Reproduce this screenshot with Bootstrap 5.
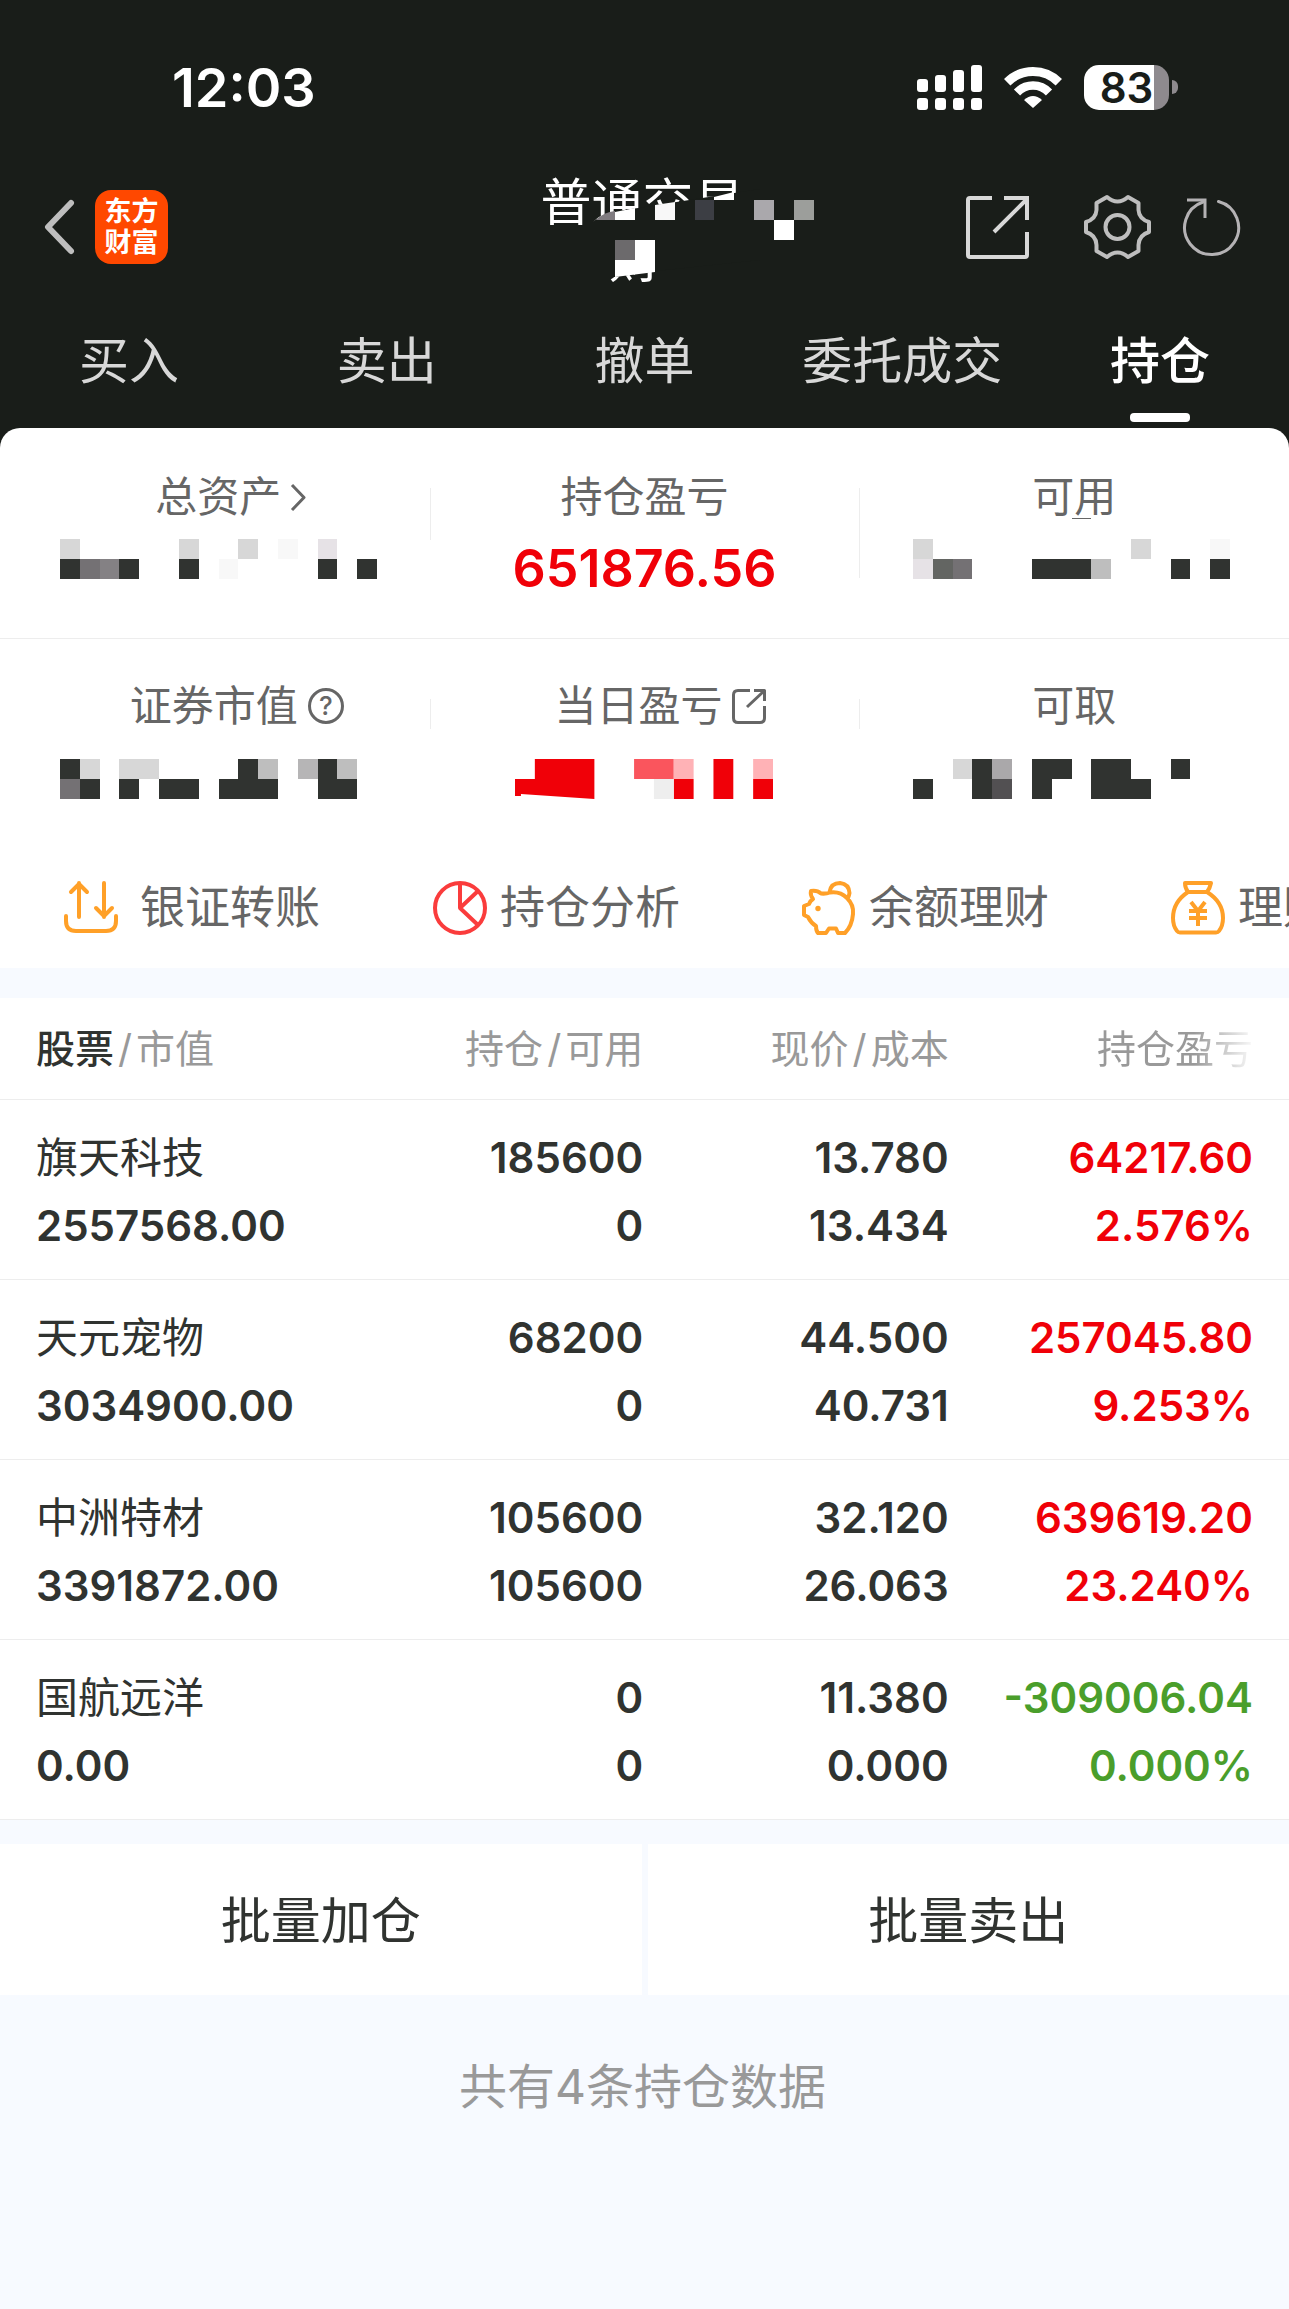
<!DOCTYPE html>
<html lang="zh-CN">
<head>
<meta charset="utf-8">
<meta name="viewport" content="width=device-width, initial-scale=1">
<title>持仓</title>
<link href="https://cdn.jsdelivr.net/npm/bootstrap@5.3.0/dist/css/bootstrap.min.css" rel="stylesheet">
<style>
  :root { --ink: #303330; --dim: #666; --faint: #999; --up: #f00008; --down: #4a9e2b; --page: #f7faff; --night: #191d19; --line: #ededed; }
  body { background: var(--page); color: var(--ink); font-family: Inter, "Noto Sans CJK SC", sans-serif; overflow-x: hidden; }
  a { color: inherit; text-decoration: none; }
  svg { display: block; flex: none; overflow: visible; fill: none; stroke-linejoin: round; }
  button { border: 0; padding: 0; background: none; color: inherit; }

  .top-area { background: var(--night); color: #fff; padding-bottom: 20px; margin-bottom: -20px; }
  .status-bar { height: 174px; padding: 0 111px 0 172px; }
  .clock { font-size: 54px; font-weight: 600; line-height: 64px; padding-top: 2px; }
  .signal-set { gap: 22px; }
  .battery { width: 85px; height: 45px; border-radius: 15px; background: linear-gradient(90deg, #fff 70px, #8e8a8e 70px); color: var(--night); font-size: 42px; font-weight: 600; line-height: 45px; }
  .battery-tip { width: 6px; height: 14px; border-radius: 0 7px 7px 0; background: #8e8a8e; margin-left: 3px; }

  .title-bar { height: 106px; padding: 0 48px 0 44px; }
  .brand-tile { width: 73px; height: 74px; border-radius: 16px; background: #ff4800; font-size: 27px; font-weight: 700; line-height: 31px; margin-left: 21px; text-align: center; }
  .account-name { font-size: 51px; line-height: 57px; padding-top: 8px; margin: 0; font-weight: 400; }
  .account-name svg { left: 0; top: 0; }
  .side-box { flex: 1 1 0; }
  .gap-wide { margin-right: 55px; }
  .gap-slim { margin-right: 32px; }

  .tab-row { height: 148px; }
  .tab-row a { padding-top: 46px; font-size: 50px; line-height: 70px; color: #d8d8d8; }
  .tab-row a.active { color: #fff; font-weight: 500; }
  .tab-row a.active::after { content: ""; width: 60px; height: 9px; margin-top: 17px; border-radius: 4px; background: #fff; }

  .panel { background: #fff; border-radius: 20px 20px 0 0; }
  .stat { position: relative; }
  .stat-first .stat { padding: 45px 0 39px; }
  .stat-first { border-bottom: 1px solid var(--line); }
  .stat-second .stat { padding: 43px 0 29px; }
  .stat + .stat::before { content: ""; position: absolute; left: 0; width: 1px; height: 52px; top: 60px; background: var(--line); }
  .stat-second .stat + .stat::before { height: 30px; }
  .stat-first .stat:last-child::before { height: 90px; }
  .stat-name { height: 48px; font-size: 42px; line-height: 48px; color: var(--dim); gap: 10px; }
  .stat-name.has-icon { padding-left: 32px; }
  .stat-name.has-help { padding-left: 44px; }
  .stat-sum { height: 60px; margin-top: 18px; font-size: 52px; font-weight: 600; line-height: 60px; color: var(--up); }
  .stat-second .stat-sum { margin-top: 29px; }
  .stat:first-child .stat-sum { padding-left: 8px; }
  .stat:last-child .stat-sum { padding-right: 6px; }
  .help-dot { width: 36px; height: 36px; border: 3px solid var(--dim); border-radius: 50%; font-size: 26px; font-weight: 500; line-height: 30px; text-align: center; }

  .quick-row { height: 120px; padding-left: 64px; font-size: 45px; line-height: 60px; color: var(--dim); }
  .quick-row a { flex: 0 0 369px; gap: 13px; white-space: nowrap; }
  .quick-row a:first-child { gap: 22px; }

  .holdings { background: #fff; margin-top: 30px; table-layout: fixed; width: 100%; }
  .holdings th { height: 101px; padding: 1px 0 0; font-size: 39px; font-weight: 400; line-height: 60px; color: var(--faint); border-bottom: 1px solid var(--line); white-space: nowrap; }
  .holdings th b { color: var(--ink); font-weight: 500; }
  .holdings th i { font-style: normal; margin: 0 4px; }
  .holdings td { padding: 24px 0 19px; font-size: 42px; font-weight: 600; line-height: 68px; border-bottom: 1px solid var(--line); }
  .holdings th:first-child, .holdings td:first-child { padding-left: 36px; }
  .holdings th:last-child, .holdings td:last-child { padding-right: 36px; }
  .holdings .stock-name { font-weight: 400; }
  .fade-out { background: linear-gradient(90deg, var(--faint) 62%, rgba(153,153,153,.1) 98%); -webkit-background-clip: text; background-clip: text; color: transparent; }
  .is-up { color: var(--up); }
  .is-down { color: var(--down); }

  .batch-row { margin-top: 24px; gap: 6px; }
  .batch-row button { height: 151px; background: #fff; font-size: 50px; line-height: 72px; padding-top: 3px; }
  .tail-note { padding: 56px 4px 56px 0; margin: 0; font-size: 48px; line-height: 72px; color: var(--faint); }
</style>
</head>
<body>
<header class="top-area">
  <div class="status-bar d-flex align-items-center justify-content-between">
    <div class="clock">12:03</div>
    <div class="signal-set d-flex align-items-center">
      <svg width="65" height="45" style="fill:#fff" aria-hidden="true">
        <rect x="0" y="14" width="11" height="13" rx="3"/><rect x="18" y="10" width="11" height="17" rx="3"/><rect x="36" y="5" width="11" height="22" rx="3"/><rect x="54" y="0" width="11" height="27" rx="3"/>
        <rect x="0" y="33" width="11" height="12" rx="3"/><rect x="18" y="33" width="11" height="12" rx="3"/><rect x="36" y="33" width="11" height="12" rx="3"/><rect x="54" y="33" width="11" height="12" rx="3"/>
      </svg>
      <svg width="58" height="43" stroke="#fff" aria-hidden="true">
        <path stroke-width="9" d="M3.200 16.200A36.500 36.500 0 0 1 54.800 16.200"/>
        <path stroke-width="8.500" d="M13 26.500A22 22 0 0 1 45 26.500"/>
        <path fill="#fff" stroke="none" d="M29 42L20 34Q29 26 38 34Z"/>
      </svg>
      <div class="d-flex align-items-center"><div class="battery text-center">83</div><div class="battery-tip"></div></div>
    </div>
  </div>

  <div class="title-bar d-flex align-items-center">
    <div class="side-box d-flex align-items-center">
      <button type="button" aria-label="返回"><svg width="30" height="54" stroke="#bebebe" stroke-width="6" stroke-linecap="round"><path d="M27 3L4 27L27 51"/></svg></button>
      <div class="brand-tile d-flex flex-column justify-content-center"><span>东方</span><span>财富</span></div>
    </div>
    <h1 class="account-name position-relative text-center">
      <span class="d-block">普通交易</span>
      <span class="d-block me-3">财</span>
      <svg class="position-absolute" width="204" height="122" viewBox="541 166 204 122" aria-hidden="true">
        <path fill="#191d19" d="M592 228V222L597 219Q607 212 624 210L638 208L760 189V260L656 271L615 277H592Z"/>
        <path fill="#807c80" d="M596 220Q604 212 615 211V220Z"/>
        <path fill="#fff" d="M615 212L635 208V220H615ZM714 197L734 192V200H714ZM774 220h20v20h-20ZM635 240h20v32L615 277V260h20Z"/>
        <path fill="#f8f8f8" d="M655 205L675 202V220H655Z"/>
        <path fill="#3c3e44" d="M695 200h19v20h-19Z"/>
        <path fill="#aaa8ac" d="M754 200h20v20h-20Z"/>
        <path fill="#9c9e9b" d="M794 200h20v20h-20Z"/>
        <path fill="#6c6a6c" d="M615 240h20v20h-20Z"/>
      </svg>
    </h1>
    <div class="side-box d-flex align-items-center justify-content-end">
      <button type="button" class="gap-wide" aria-label="分享"><svg width="63" height="63" stroke="#d8d8d8" stroke-width="4"><path style="stroke-linejoin:miter" d="M26 2H4Q2 2 2 4V59Q2 61 4 61H59Q61 61 61 59V36M38 2H61V24M28 36L61 3"/></svg></button>
      <button type="button" class="gap-slim" aria-label="设置"><svg width="67" height="65" stroke="#bebebe" stroke-width="4"><path d="M23 2Q33.500 11 44 2L54.500 8V15Q55 24 65 27V37Q55 40 54.500 50V56L44 62Q33.500 53 23 62L12.500 56V50Q12 40 2 37V27Q12 24 12.500 15V8Z"/><circle cx="33.500" cy="32" r="12"/></svg></button>
      <button type="button" aria-label="刷新"><svg width="58" height="58" stroke="#b4b2b4" stroke-width="3"><path stroke-linecap="round" d="M35.500 3.500A27 27 0 1 1 20 4"/><path style="stroke-linejoin:miter" d="M4 2H22V20"/></svg></button>
    </div>
  </div>

  <nav class="tab-row nav nav-fill flex-nowrap">
    <a class="col d-flex flex-column align-items-center" href="#">买入</a>
    <a class="col d-flex flex-column align-items-center" href="#">卖出</a>
    <a class="col d-flex flex-column align-items-center" href="#">撤单</a>
    <a class="col d-flex flex-column align-items-center" href="#">委托成交</a>
    <a class="col d-flex flex-column align-items-center active" href="#" aria-current="page">持仓</a>
  </nav>
</header>

<main>
  <section class="panel position-relative overflow-hidden">
    <div class="stat-first row g-0">
      <div class="stat col-4">
        <a href="#" class="stat-name has-icon d-flex align-items-center justify-content-center">总资产<svg width="15" height="27" stroke="#666" stroke-width="3"><path d="M1 1L13 13.500L1 26"/></svg></a>
        <div class="stat-sum d-flex justify-content-center"><svg width="317" height="40" viewBox="0 0 16 2" preserveAspectRatio="none" shape-rendering="crispEdges" aria-hidden="true">
          <path fill="#d7d7d7" d="M0 0h1v1H0zM6 0h1v1H6zM9 0h1v1H9z"/><path fill="#f8f8f8" d="M11 0h1v1h-1zM8 1h1v1H8z"/><path fill="#e6e2e6" d="M13 0h1v1h-1z"/>
          <path fill="#303330" d="M0 1h1v1H0zM3 1h1v1H3zM6 1h1v1H6zM13 1h1v1h-1zM15 1h1v1h-1z"/><path fill="#747174" d="M1 1h1v1H1z"/><path fill="#848184" d="M2 1h1v1H2z"/>
        </svg></div>
      </div>
      <div class="stat col-4">
        <div class="stat-name d-flex align-items-center justify-content-center">持仓盈亏</div>
        <div class="stat-sum text-center">651876.56</div>
      </div>
      <div class="stat col-4">
        <div class="stat-name d-flex align-items-center justify-content-center">可用</div>
        <div class="stat-sum d-flex justify-content-center"><svg width="317" height="40" viewBox="0 0 16 2" preserveAspectRatio="none" shape-rendering="crispEdges" aria-hidden="true">
          <path fill="#d7d7d7" d="M0 0h1v1H0zM11 0h1v1h-1z"/><path fill="#f8f8f8" d="M15 0h1v1h-1z"/><path fill="#e6e2e6" d="M0 1h1v1H0z"/><path fill="#636562" d="M1 1h1v1H1z"/><path fill="#747174" d="M2 1h1v1H2z"/>
          <path fill="#303330" d="M6 1h3v1H6zM13 1h1v1h-1zM15 1h1v1h-1z"/><path fill="#bebebe" d="M9 1h1v1H9z"/><path fill="#666" d="M8 -1.050h1v.07h-1z"/>
        </svg></div>
      </div>
    </div>

    <div class="stat-second row g-0">
      <div class="stat col-4">
        <div class="stat-name has-help d-flex align-items-center justify-content-center">证券市值<span class="help-dot">?</span></div>
        <div class="stat-sum d-flex justify-content-center"><svg width="317" height="40" viewBox="0 0 16 2" preserveAspectRatio="none" shape-rendering="crispEdges" aria-hidden="true">
          <path fill="#d7d7d7" d="M1 0h1v1H1zM3 0h2v1H3z"/><path fill="#bebebe" d="M10 0h1v1h-1zM14 0h1v1h-1z"/><path fill="#b6b5b6" d="M12 0h1v1h-1z"/><path fill="#747174" d="M0 1h1v1H0z"/>
          <path fill="#303330" d="M0 0h1v1H0zM9 0h1v1h1v1H8V1h1zM13 0h1v1h1v1h-2zM1 1h1v1H1zM3 1h1v1H3zM5 1h2v1H5z"/>
        </svg></div>
      </div>
      <div class="stat col-4">
        <a href="#" class="stat-name has-icon d-flex align-items-center justify-content-center">当日盈亏<svg width="34" height="35" stroke="#666" stroke-width="3"><path d="M18 1.500H6Q1.500 1.500 1.500 6V29Q1.500 33.500 6 33.500H28Q32.500 33.500 32.500 29V17M22 1.500H32.500V12M15 18L32 2"/></svg></a>
        <div class="stat-sum d-flex justify-content-center"><svg width="258" height="40" viewBox="0 0 13 2" preserveAspectRatio="none" aria-hidden="true">
          <path fill="#f00008" d="M1 0H4V2L.3 1.750V1.850H0V1H1zM8 1h1v1H8zM10 0h1v2h-1zM12 1h1v1h-1z"/><path fill="#fa555d" d="M6 0h2v1H6z"/><path fill="#ffb2b6" d="M8 0h1v1H8zM12 0h1v1h-1z"/><path fill="#eee" d="M7 1h1v1H7z"/>
        </svg></div>
      </div>
      <div class="stat col-4">
        <div class="stat-name d-flex align-items-center justify-content-center">可取</div>
        <div class="stat-sum d-flex justify-content-center"><svg width="317" height="40" viewBox="0 0 16 2" preserveAspectRatio="none" shape-rendering="crispEdges" aria-hidden="true">
          <path fill="#d7d7d7" d="M2 0h1v1H2z"/><path fill="#aaa8aa" d="M4 0h1v1H4z"/><path fill="#525052" d="M4 1h1v1H4z"/>
          <path fill="#303330" d="M0 1h1v1H0zM3 0h1v2H3zM6 0h2v1H7v1H6zM9 0h2v1h1v1H9zM13 0h1v1h-1z"/>
        </svg></div>
      </div>
    </div>

    <nav class="quick-row d-flex align-items-center">
      <a href="#" class="d-flex align-items-center"><svg width="54" height="54" stroke="#ffa028" stroke-width="4" stroke-linecap="round"><path d="M15 36V2M7 11L15 3L23 11M40 2V36M32 27L40 35L48 27M2 35V40Q2 50 12 50H42Q52 50 52 40V35"/></svg>银证转账</a>
      <a href="#" class="d-flex align-items-center"><svg width="54" height="54" stroke="#fa3c3c" stroke-width="4"><circle cx="27" cy="27" r="25"/><path d="M27 2V27L45 10M27 27L45 44"/></svg>持仓分析</a>
      <a href="#" class="d-flex align-items-center"><svg width="54" height="54" stroke="#ffa028" stroke-width="4"><path d="M9 10Q15 9 19 12.500Q24 13 28 11.500Q38 10 45 17Q52 24 51 33Q50 45 43 52H36L34 47.500H27L24 52H16Q14 50 14 45Q9 42 6 36L2 34V25L7 23Q8 20 11 18Q8 14 9 10ZM27.500 11Q29 2 38 2Q47 3 47.500 12Q47 15 46 17"/><circle cx="16" cy="27.500" r="2.700" fill="#ffa028" stroke="none"/></svg>余额理财</a>
      <a href="#" class="d-flex align-items-center"><svg width="54" height="54" stroke="#ffa028" stroke-width="4"><path d="M17 11Q14 7 14 2H40Q39 7 36 11ZM17 11Q2 21 2 37Q2 45 6 50Q7 51.500 9 51.500H45Q47 51.500 48 50Q52 45 52 37Q52 21 36 11M20 21L27 30L34 21M27 30V45M18 30H36M18 37H36"/></svg>理财</a>
    </nav>
  </section>

  <table class="holdings">
    <colgroup><col style="width:26.1%"><col style="width:23.8%"><col style="width:23.7%"><col style="width:26.4%"></colgroup>
    <thead><tr>
      <th><b>股票</b><i>/</i>市值</th>
      <th class="text-end">持仓<i>/</i>可用</th>
      <th class="text-end">现价<i>/</i>成本</th>
      <th class="text-end"><span class="fade-out">持仓盈亏</span></th>
    </tr></thead>
    <tbody>
      <tr><td><div class="stock-name">旗天科技</div>2557568.00</td><td class="text-end">185600<br>0</td><td class="text-end">13.780<br>13.434</td><td class="text-end is-up">64217.60<br>2.576%</td></tr>
      <tr><td><div class="stock-name">天元宠物</div>3034900.00</td><td class="text-end">68200<br>0</td><td class="text-end">44.500<br>40.731</td><td class="text-end is-up">257045.80<br>9.253%</td></tr>
      <tr><td><div class="stock-name">中洲特材</div>3391872.00</td><td class="text-end">105600<br>105600</td><td class="text-end">32.120<br>26.063</td><td class="text-end is-up">639619.20<br>23.240%</td></tr>
      <tr><td><div class="stock-name">国航远洋</div>0.00</td><td class="text-end">0<br>0</td><td class="text-end">11.380<br>0.000</td><td class="text-end is-down">-309006.04<br>0.000%</td></tr>
    </tbody>
  </table>

  <div class="batch-row d-flex">
    <button type="button" class="col">批量加仓</button>
    <button type="button" class="col">批量卖出</button>
  </div>
  <p class="tail-note text-center">共有4条持仓数据</p>
</main>
<script src="https://cdn.jsdelivr.net/npm/bootstrap@5.3.0/dist/js/bootstrap.bundle.min.js"></script>
</body>
</html>
